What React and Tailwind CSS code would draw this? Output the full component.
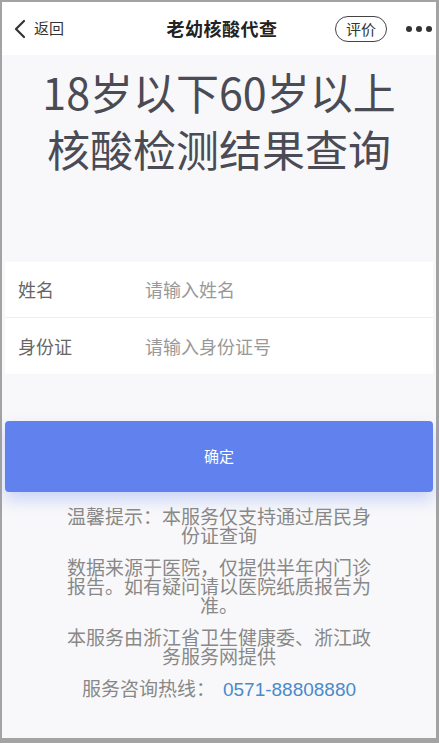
import React from 'react';

const font = { fontFamily: '"Noto Sans CJK SC", "Noto Sans", sans-serif' };

const App = () => {
  return (
    <div className="w-[439px] h-[743px] bg-[#a3a3a3] pt-[2px] pl-[2px] pr-[3px] pb-[5px] overflow-hidden" style={font}>
      <div className="h-full bg-[#f8f8fa] flex flex-col">
        <div className="h-[53px] bg-white flex items-center pl-[10px] pr-[4px] shrink-0">
          <div className="flex items-center w-[110px]">
            <svg width="16" height="22" viewBox="0 0 16 22" fill="none" stroke="#333" strokeWidth="2.2" strokeLinecap="round" strokeLinejoin="round">
              <path d="M12 3L4 11l8 8" />
            </svg>
            <span className="ml-[6px] text-[15px] text-[#333]">返回</span>
          </div>
          <div className="flex-1 text-center text-[18px] font-bold text-[#222] tracking-[0.5px]">老幼核酸代查</div>
          <div className="w-[110px] flex items-center justify-end">
            <div className="h-[26px] px-[10px] rounded-full border-[1.5px] border-[#444] text-[15px] text-[#333] flex items-center leading-none">评价</div>
            <div className="ml-[19px] flex gap-[4px]">
              <span className="w-[6px] h-[6px] rounded-full bg-[#333]" />
              <span className="w-[6px] h-[6px] rounded-full bg-[#333]" />
              <span className="w-[6px] h-[6px] rounded-full bg-[#333]" />
            </div>
          </div>
        </div>

        <div className="pt-[8px] text-center text-[#4a4b55] text-[43px] leading-[57px]">
          <div>18岁以下60岁以上</div>
          <div>核酸检测结果查询</div>
        </div>

        <div className="mt-[85px] mx-[3px] bg-white">
          <div className="h-[56px] flex items-center pl-[13px] border-b border-[#eeeeee]">
            <span className="w-[127px] text-[18px] text-[#666]">姓名</span>
            <span className="text-[18px] text-[#999]">请输入姓名</span>
          </div>
          <div className="h-[56px] flex items-center pl-[13px]">
            <span className="w-[127px] text-[18px] text-[#666]">身份证</span>
            <span className="text-[18px] text-[#999]">请输入身份证号</span>
          </div>
        </div>

        <div className="mt-[47px] mx-[3px] h-[71px] rounded-[4px] bg-[#6181ef] shadow-[0_8px_16px_rgba(97,129,239,0.3)] flex items-center justify-center text-white text-[15px]">
          确定
        </div>

        <div className="mt-[14px] mx-auto w-[306px] text-center text-[#888] text-[19px] leading-[19px] flex flex-col gap-[13px]">
          <p>温馨提示：本服务仅支持通过居民身份证查询</p>
          <p>数据来源于医院，仅提供半年内门诊报告。如有疑问请以医院纸质报告为准。</p>
          <p>本服务由浙江省卫生健康委、浙江政务服务网提供</p>
          <p>服务咨询热线：<span className="ml-[8px] text-[#4a8ac9]" style={{ fontFamily: '"Liberation Sans", Arial, sans-serif' }}>0571-88808880</span></p>
        </div>
      </div>
    </div>
  );
};

export default App;
